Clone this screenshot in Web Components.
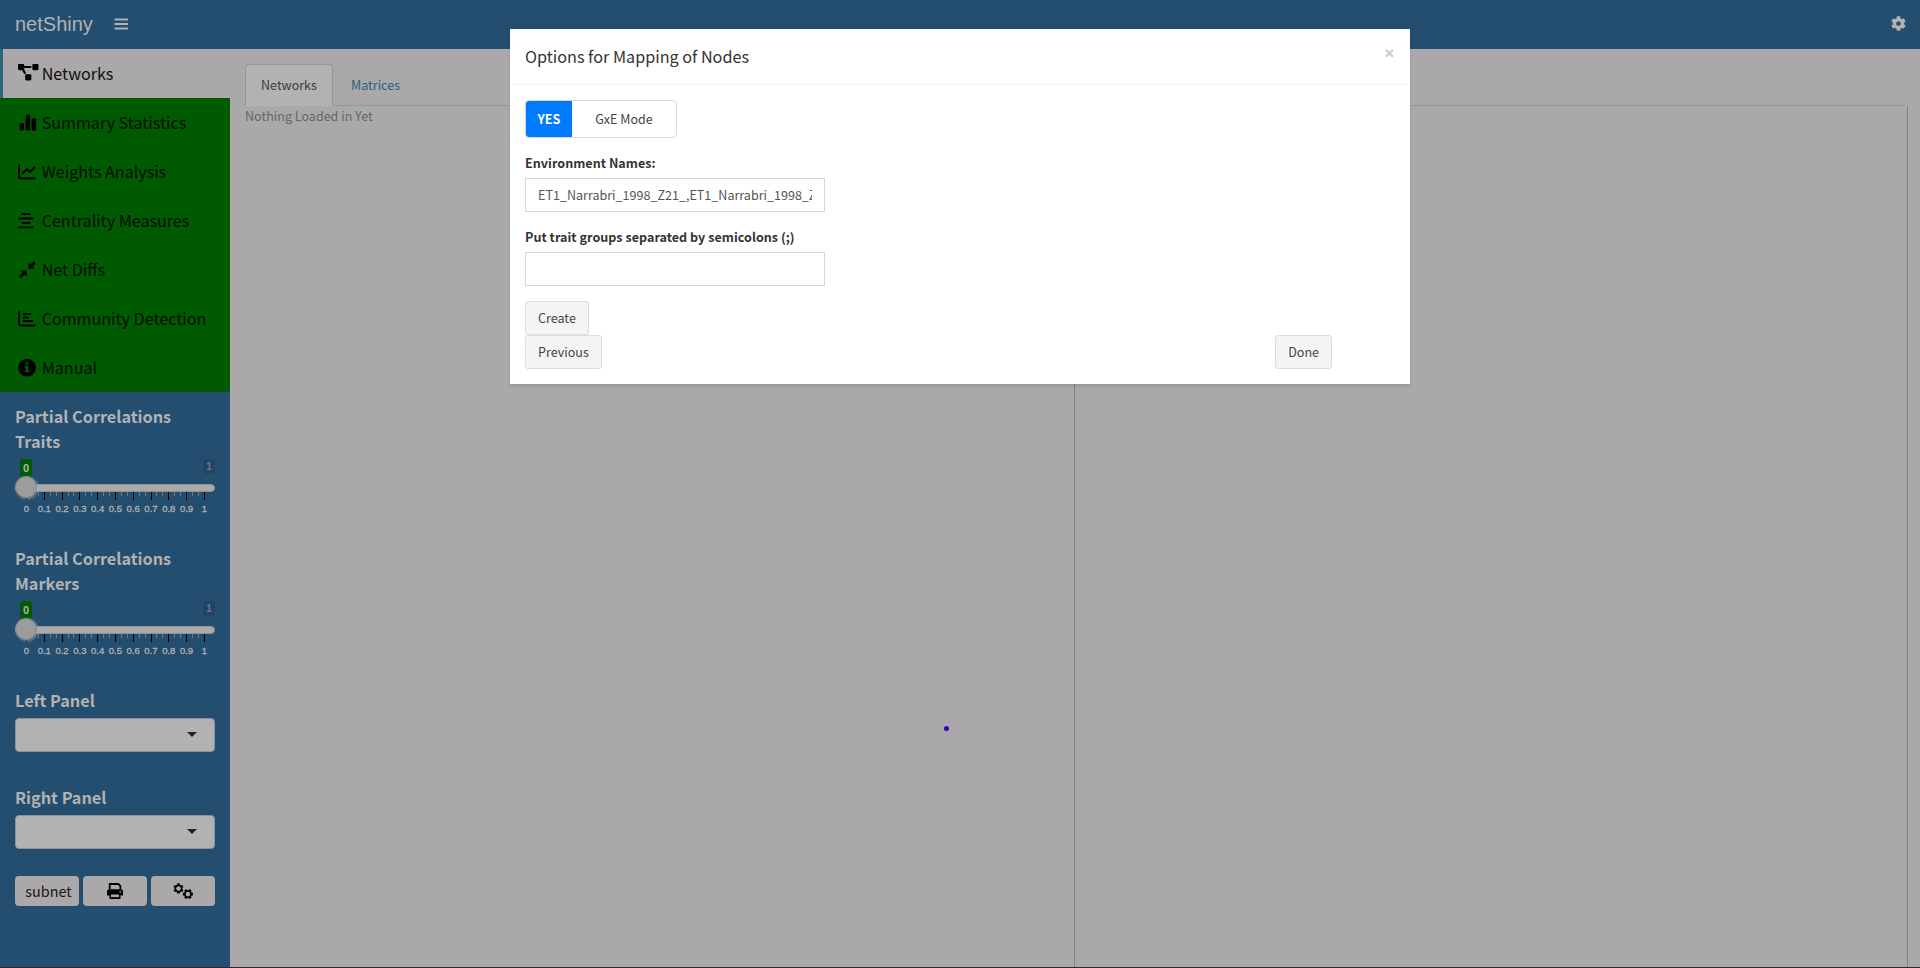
<!DOCTYPE html>
<html lang="en">
<head>
<meta charset="utf-8">
<title>netShiny</title>
<style>
html,body{margin:0;height:100%;overflow:hidden}
body{font-family:"Noto Sans CJK SC","Noto Sans",sans-serif;font-size:12.55px;color:#333;background:#aaa8a9}
</style>
</head>
<body>
<net-app></net-app>
<script>
const COG='M487.4 315.7l-42.6-24.6c4.3-23.2 4.3-47 0-70.2l42.6-24.6c4.9-2.8 7.1-8.6 5.5-14-11.1-35.6-30-67.8-54.7-94.6-3.8-4.1-10-5.1-14.8-2.3L380.8 110c-17.9-15.4-38.5-27.3-60.8-35.1V25.8c0-5.6-3.9-10.5-9.4-11.7-36.7-8.2-74.3-7.8-109.2 0-5.5 1.2-9.4 6.1-9.4 11.7V75c-22.2 7.9-42.8 19.8-60.8 35.1L88.7 85.5c-4.9-2.8-11-1.9-14.8 2.3-24.7 26.7-43.6 58.9-54.7 94.6-1.7 5.4.6 11.2 5.5 14L67.3 221c-4.3 23.2-4.3 47 0 70.2l-42.6 24.6c-4.9 2.8-7.1 8.6-5.5 14 11.1 35.6 30 67.8 54.7 94.6 3.8 4.1 10 5.1 14.8 2.3l42.6-24.6c17.9 15.4 38.5 27.3 60.8 35.1v49.2c0 5.6 3.9 10.5 9.4 11.7 36.7 8.2 74.3 7.8 109.2 0 5.5-1.2 9.4-6.1 9.4-11.7v-49.2c22.2-7.9 42.8-19.8 60.8-35.1l42.6 24.6c4.9 2.8 11 1.9 14.8-2.3 24.7-26.7 43.6-58.9 54.7-94.6 1.5-5.5-.7-11.3-5.6-14.1zM256 336c-44.1 0-80-35.9-80-80s35.9-80 80-80 80 35.9 80 80-35.9 80-80 80z';
/* name: [width, height, viewBox, markup] */
const ICONS={
 menu:[14,12,'0 0 14 12','<path d="M.5 1.500h13.500M.5 6h13.500M.5 10.500h13.500" stroke="currentColor" stroke-width="2"/>'],
 cog:[15,15,'0 0 512 512',`<path fill="currentColor" d="${COG}"/>`],
 network:[20.5,16.4,'0 0 640 512','<path fill="currentColor" d="M384 320H256c-17.67 0-32 14.33-32 32v128c0 17.67 14.33 32 32 32h128c17.67 0 32-14.33 32-32V352c0-17.67-14.33-32-32-32zM192 32c0-17.67-14.33-32-32-32H32C14.33 0 0 14.33 0 32v128c0 17.67 14.33 32 32 32h95.72l73.16 128.04C211.98 300.98 232.4 288 256 288h.28L192 175.51V128h224V64H192V32zM608 0H480c-17.67 0-32 14.33-32 32v128c0 17.67 14.33 32 32 32h128c17.67 0 32-14.33 32-32V32c0-17.67-14.33-32-32-32z"/>'],
 bars:[20,18,'0 0 20 18','<g fill="currentColor"><rect x="1.7" y="9.3" width="4.4" height="7.2" rx="1"/><rect x="7.7" y=".8" width="4.5" height="15.7" rx="1"/><rect x="13.6" y="4.6" width="4.5" height="11.9" rx="1"/></g>'],
 line:[20,18,'0 0 20 18','<g fill="none" stroke="currentColor" stroke-width="2" stroke-linecap="round" stroke-linejoin="round"><path d="M1 2v11.6q0 2 2 2h13.9"/><path d="M5 10l4-3.9 3 2.9 4.3-4.5"/></g>'],
 center:[20,18,'0 0 20 18','<path d="M4.5 2h7M1 6.5h14M4.5 11h7M1 15.4h14" stroke="currentColor" stroke-width="1.9" stroke-linecap="round"/>'],
 compress:[20,18,'0 0 20 18','<g fill="currentColor"><path d="M10.4 1.5v6.3h6.4l-2.2-2.2 3-3.1L15.7.4l-3 3.2z"/><path d="M8.6 9.3H2.4l2.2 2.3-4 3.8 2 2.1 3.9-3.9 2.1 2.1z"/></g>'],
 hbars:[20,18,'0 0 20 18','<g fill="none" stroke="currentColor" stroke-width="1.9" stroke-linecap="round"><path d="M1 2v11.6q0 1.9 2 1.9h14"/><path d="M5.6 4h6.8M5.6 7.5h4.5M5.6 11h8.8"/></g>'],
 info:[20,18,'0 0 20 18','<circle cx="9" cy="8.700" r="8.900" fill="currentColor"/><path fill="#005a00" d="M7.7 3.4h2.6v2.5H7.7zM6.7 7.1h3.6v4.4h1.1v1.8H6.7v-1.8h1V8.900h-1z"/>'],
 printer:[16,16,'0 0 16 16','<path d="M2.7 6V1h8.7l2 2v3" fill="none" stroke="currentColor" stroke-width="1.8"/><path d="M2 6.2h12q2 0 2 2V12.500h-2.500v3.500h-11v-3.500H0V8.200q0-2 2-2z" fill="currentColor"/><path d="M4 11.500h8v2.600H4z" fill="#aaa8a9"/><circle cx="13.200" cy="8.900" r=".8" fill="#aaa8a9"/>'],
 cogs:[21,17,'0 0 21 17',`<g fill="currentColor"><path transform="translate(.2 .2) scale(.0206)" d="${COG}"/><path transform="translate(20.200 5.800) rotate(90) scale(.0206)" d="${COG}"/></g><g fill="#aaa8a9"><circle cx="5.500" cy="5.500" r="2.300"/><circle cx="14.900" cy="11.100" r="2.300"/></g>`]
};
function define(tag,html){
 const t=document.createElement('template');t.innerHTML=html;
 customElements.define(tag,class extends HTMLElement{
  constructor(){super();this.attachShadow({mode:'open'}).append(t.content.cloneNode(true))}
 });
}
customElements.define('net-icon',class extends HTMLElement{
 connectedCallback(){
  if(this.shadowRoot)return;
  const [w,h,v,m]=ICONS[this.getAttribute('name')];
  this.attachShadow({mode:'open'}).innerHTML=`<style>:host{display:inline-flex;flex:none}svg{display:block;overflow:visible}</style><svg width="${w}" height="${h}" viewBox="${v}">${m}</svg>`;
 }
});
define('net-header',`<style>
:host{display:flex;align-items:center;height:49px;background:#234e70;color:#b2b2b2;box-sizing:border-box;padding:0 15px}
.brand{font:20px/48px "Liberation Sans",Arial,sans-serif;width:99px;padding-bottom:1px}
net-icon{margin-top:-1px}.gear{margin:-2px -.5px 0 auto}
</style><div class="brand">netShiny</div><net-icon name="menu"></net-icon><net-icon class="gear" name="cog"></net-icon>`);
define('net-menu-item',`<style>
:host{display:flex;align-items:center;height:49px;box-sizing:border-box;padding-left:18px;background:#005a00;color:#000;font-size:16.1px;line-height:24px}
:host([active]){background:#aaa8a9;border-left:3px solid #2a6384;padding-left:15px}
.i{width:23.700px;display:flex;flex:none}span{white-space:nowrap;opacity:.85;margin-top:-2px}:host([active]) span{opacity:.9}
</style><div class="i"><slot name="icon"></slot></div><span><slot></slot></span>`);
customElements.define('net-slider',class extends HTMLElement{
 connectedCallback(){
  if(this.shadowRoot)return;
  let ticks='';
  for(let i=0;i<=30;i++){const x=11.500+i*5.930,M=i%3===0;ticks+=`<rect x="${Math.round(x-.5)}" y="0" width="1" height="${M?8:4}" fill="${M?'#000':'#73777a'}"/>`}
  let labels='';
  for(let i=0;i<=10;i++)labels+=`<span>${i===0?'0':i===10?'1':'0.'+i}</span>`;
  this.attachShadow({mode:'open'}).innerHTML=`<style>
:host{display:block;height:142px;box-sizing:border-box;padding-top:12px;color:#b2b2b2}
h4{margin:0;font-size:16.250px;line-height:25px;font-weight:700;height:50px;white-space:nowrap}
.vals{display:flex;justify-content:space-between;align-items:flex-start;margin-top:5px;height:25px;padding-left:5px;font:bold 10px/15px "Liberation Sans",Arial,sans-serif}
.from,.to{width:12px;text-align:center;border-radius:3px}
.from{background:#005a00;height:18px;line-height:18px;font-size:11px}
.to{background:#214565;height:15px;color:#6f7a83}
.bar{height:8px;box-sizing:border-box;border-radius:4px;background:#aaaaaa;border:1px solid #8f9295;position:relative}
.knob{position:absolute;left:-1px;top:-9px;width:22px;height:22px;box-sizing:border-box;border-radius:50%;background:#9d9c9c;border:1px solid #828587;box-shadow:1px 1px 3px rgba(178,178,178,.6)}
svg{display:block}.l{display:flex;margin:3px 0 0 2.600px;font:9.500px/12px "Liberation Sans",Arial,sans-serif}
.l span{width:17.790px;text-align:center;flex:none;-webkit-text-stroke:.3px #b2b2b2}
</style><h4><slot></slot></h4><div class="vals"><div class="from">0</div><div class="to">1</div></div><div class="bar"><div class="knob"></div></div><svg width="200" height="8">${ticks}</svg><div class="l">${labels}</div>`;
 }
});
define('net-select',`<style>
:host{display:block;height:97px;color:#b2b2b2}
h4{margin:0;font-size:16.250px;line-height:25px;font-weight:700}
.b{height:34px;box-sizing:border-box;border:1px solid #8e9195;border-radius:4px;background:#b2b2b2;margin-top:5px;display:flex;align-items:center;justify-content:flex-end;padding-right:17px}
.b i{border:5px solid transparent;border-top-color:#232323;border-bottom:0;margin-top:-2px}
</style><h4><slot></slot></h4><div class="b"><i></i></div>`);
define('net-sidebar',`<style>
:host{display:block;background:#234e70;width:230px;flex:none}
.c{padding:0 15px}.btns{display:grid;grid-template-columns:repeat(3,64px);gap:4px;margin-top:-6px}
.btns div{height:30px;border-radius:4px;background:#aaa8a9;color:#000;display:flex;align-items:center;justify-content:center;font-size:14.400px;line-height:30px}
.btns span{opacity:.85;padding-left:3px}
</style>
<net-menu-item active><net-icon slot="icon" name="network" style="margin-top:-3px"></net-icon>Networks</net-menu-item>
<net-menu-item><net-icon slot="icon" name="bars"></net-icon>Summary Statistics</net-menu-item>
<net-menu-item><net-icon slot="icon" name="line"></net-icon>Weights Analysis</net-menu-item>
<net-menu-item><net-icon slot="icon" name="center"></net-icon>Centrality Measures</net-menu-item>
<net-menu-item><net-icon slot="icon" name="compress"></net-icon>Net Diffs</net-menu-item>
<net-menu-item><net-icon slot="icon" name="hbars"></net-icon>Community Detection</net-menu-item>
<net-menu-item><net-icon slot="icon" name="info"></net-icon>Manual</net-menu-item>
<div class="c"><net-slider>Partial Correlations<br>Traits</net-slider><net-slider>Partial Correlations<br>Markers</net-slider>
<net-select style="margin-top:12px">Left Panel</net-select><net-select>Right Panel</net-select>
<div class="btns"><div><span>subnet</span></div><div><net-icon name="printer"></net-icon></div><div><net-icon name="cogs"></net-icon></div></div></div>`);
define('net-content',`<style>
:host{display:flex;flex-direction:column;flex:1;padding:15px 12px 0 15px;box-sizing:border-box;background:#aaa8a9}
.tabs{display:flex;height:42px;box-sizing:border-box;border-bottom:1px solid #979596;margin-right:3px;line-height:20px}
.tab{padding:11px 16px 0 18px;color:#2a6384;box-sizing:border-box;height:42px}
.on{width:88px;padding:10px 15px 0;background:#b2b2b2;border:1px solid #979596;border-bottom:0;border-radius:4px 4px 0 0;color:#3c3c3c}
.panes{display:grid;grid-template-columns:830px 1fr;flex:1}
.panes div{border-right:1px solid #838182;color:#666;line-height:20px}
</style><div class="tabs"><div class="tab on">Networks</div><div class="tab">Matrices</div></div><div class="panes"><div>Nothing Loaded in Yet</div><div></div></div>`);
define('net-button',`<style>:host{display:inline-block;box-sizing:border-box;height:34px;border:1px solid #ddd;border-radius:3px;background:#f4f4f4;color:#444;padding:6px 12px;line-height:20px;white-space:nowrap}</style><slot></slot>`);
define('net-field',`<style>:host{display:block;width:300px;margin-bottom:15px}
label{display:block;font-weight:700;line-height:20px;margin-bottom:5px;color:#333;white-space:nowrap;letter-spacing:.03px}
.in{height:34px;box-sizing:border-box;border:1px solid #d2d6de;padding:6px 12px;color:#555;background:#fff}
.in div{overflow:hidden;white-space:nowrap;line-height:20px;height:20px}</style><label><slot name="label"></slot></label><div class="in"><div><slot></slot></div></div>`);
define('net-modal',`<style>
:host{position:absolute;left:510px;top:29px;width:900px;height:355px;background:#fff;box-shadow:0 2px 3px rgba(0,0,0,.125)}
header{display:flex;justify-content:space-between;height:56px;box-sizing:border-box;border-bottom:1px solid #f4f4f4;padding:15px}
h4{margin:-1px 0 0;font-weight:400;font-size:16.180px;line-height:26px;color:#333}
.x{width:11px;height:11px;margin:4px 0 0}
main{padding:15px}
.toggle{display:flex;width:152px;height:38px;box-sizing:border-box;border:1px solid #d9d9d9;border-radius:4px;overflow:hidden;line-height:36px;text-align:center;margin-bottom:15px}
.yes{width:46px;background:#007bff;color:#fff;font-weight:700}.mode{flex:1;color:#444}
.row{display:flex;justify-content:space-between;padding-right:63px}
net-button{vertical-align:top}
</style><header><h4>Options for Mapping of Nodes</h4><svg class="x" viewBox="0 0 11 11"><path d="M1.800 1.700l7.200 7.200M9 1.700L1.800 8.900" stroke="#ccc" stroke-width="2"/></svg></header>
<main><div class="toggle"><div class="yes">YES</div><div class="mode">GxE Mode</div></div>
<net-field><span slot="label">Environment Names:</span>ET1_Narrabri_1998_Z21_,ET1_Narrabri_1998_Z22_</net-field>
<net-field><span slot="label">Put trait groups separated by semicolons (;)</span></net-field>
<div><net-button>Create</net-button></div><div class="row"><net-button>Previous</net-button><net-button>Done</net-button></div></main>`);
define('net-app',`<style>
:host{display:flex;flex-direction:column;height:968px;box-sizing:border-box;border-bottom:1px solid #35222a;position:relative}
.body{display:flex;flex:1}
.dot{position:absolute;left:944px;top:726px;width:5px;height:5px;border-radius:50%;background:#3b00b5}
</style><net-header></net-header><div class="body"><net-sidebar></net-sidebar><net-content></net-content></div><div class="dot"></div><net-modal></net-modal>`);
</script>
</body>
</html>
